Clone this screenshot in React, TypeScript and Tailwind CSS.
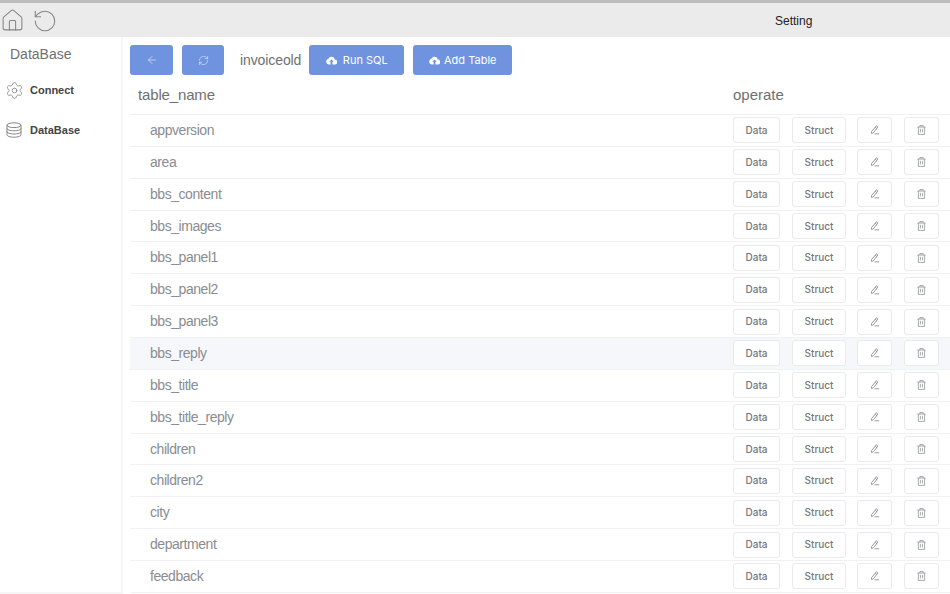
import { ArrowLeft, RefreshCw, Settings, Home, RotateCcw } from "lucide-react";

const tables = [
  "appversion",
  "area",
  "bbs_content",
  "bbs_images",
  "bbs_panel1",
  "bbs_panel2",
  "bbs_panel3",
  "bbs_reply",
  "bbs_title",
  "bbs_title_reply",
  "children",
  "children2",
  "city",
  "department",
  "feedback",
];

function CloudIcon() {
  return (
    <svg width="11" height="9" viewBox="0 0 24 20" fill="currentColor">
      <path d="M19.4 8A7.5 7.5 0 0 0 5.1 6.2 6.5 6.5 0 0 0 6 19h4v-6H7l5-5 5 5h-3v6h5a5.5 5.5 0 0 0 .4-11z" />
    </svg>
  );
}

function DbIcon() {
  return (
    <svg width="16" height="16" viewBox="0 0 16 16" fill="none" stroke="currentColor" strokeWidth="0.9" className="text-[#777]">
      <ellipse cx="8" cy="3.2" rx="7" ry="2.4" />
      <path d="M1 3.2V12.8C1 14.1 4.1 15.2 8 15.2S15 14.1 15 12.8V3.2" />
      <path d="M1 6.4C1 7.7 4.1 8.8 8 8.8S15 7.7 15 6.4" />
      <path d="M1 9.6C1 10.9 4.1 12 8 12S15 10.9 15 9.6" />
    </svg>
  );
}

function EditIcon() {
  return (
    <svg width="10" height="10" viewBox="0 0 12 12" fill="none" stroke="#85888d" strokeWidth="1">
      <path d="M7.6 1 9.5 2.4 4 9.4 1.9 10.3 1.8 8z" />
      <path d="M6.2 2.8 8.2 4.2" />
      <path d="M5.5 10.6H11" />
    </svg>
  );
}

function DeleteIcon() {
  return (
    <svg width="9" height="10" viewBox="0 0 10 11" fill="none" stroke="#92959a" strokeWidth="0.9">
      <path d="M0.5 2.2H9.5" />
      <path d="M3.2 2.2V0.6H6.8V2.2" />
      <path d="M1.5 2.2V10.4H8.5V2.2" />
      <path d="M3.8 4.2V8.2M6.2 4.2V8.2" />
    </svg>
  );
}

function OpButton({ className, children }: { className: string; children: React.ReactNode }) {
  return (
    <button className={`h-[26px] flex items-center justify-center rounded-[3px] border border-[#e8eaee] bg-white font-['Inter',sans-serif] text-[10px] font-medium text-[#74777c] ${className}`}>
      {children}
    </button>
  );
}

function Row({ name }: { name: string }) {
  return (
    <div className={`h-[31.86px] flex items-center border-b border-[#eff1f4] pl-[20px] ${name === "bbs_reply" ? "bg-[#f5f7fa]" : "bg-white"}`}>
      <span className="w-[583px] text-[14px] tracking-[-0.45px] text-[#8a8c91]">{name}</span>
      <div className="flex items-center">
        <OpButton className="w-[47px]">Data</OpButton>
        <OpButton className="w-[54px] ml-[12px]">Struct</OpButton>
        <OpButton className="w-[35px] ml-[11px]">
          <EditIcon />
        </OpButton>
        <OpButton className="w-[35px] ml-[12px]">
          <DeleteIcon />
        </OpButton>
      </div>
    </div>
  );
}

export default function App() {
  return (
    <div className="w-[950px] h-[594px] overflow-hidden flex flex-col bg-white font-['Liberation_Sans',sans-serif]">
      <div className="h-[37px] shrink-0 flex items-center bg-[#ebebeb] border-t-[3px] border-[#bdbdbd]">
        <div className="flex items-center text-[#858585] mt-[1px] w-[62px]">
          <Home size={25} strokeWidth={1} />
          <RotateCcw size={26} strokeWidth={1} className="ml-[7px]" />
        </div>
        <span className="ml-[713px] mt-[1px] text-[12px] text-[#222]">Setting</span>
      </div>

      <div className="flex flex-1 min-h-0">
        <aside className="w-[123px] shrink-0 border-r-2 border-b-2 border-[#f6f6f6]">
          <div className="pl-[10px] pt-[8px] text-[14px] leading-[18px] text-[#707070]">DataBase</div>
          <div className="mt-[7px] flex items-center h-[40px] pl-[5px]">
            <Settings size={19} strokeWidth={0.9} className="text-[#777]" />
            <span className="ml-[6px] text-[11px] font-bold text-[#444]">Connect</span>
          </div>
          <div className="flex items-center h-[40px] pl-[6px]">
            <DbIcon />
            <span className="ml-[8px] text-[11px] font-bold text-[#444]">DataBase</span>
          </div>
        </aside>

        <main className="flex-1 min-w-0 pl-[7px]">
          <div className="flex items-center h-[30px] mt-[8px]">
            <button className="w-[43px] h-[30px] flex items-center justify-center rounded-[3px] bg-[#7093e0] text-white/80">
              <ArrowLeft size={12} strokeWidth={1.3} />
            </button>
            <button className="w-[42px] h-[30px] ml-[9px] flex items-center justify-center rounded-[3px] bg-[#7093e0] text-white/80">
              <RefreshCw size={11} strokeWidth={1.3} />
            </button>
            <span className="ml-[16px] text-[14px] tracking-[-0.1px] text-[#707070]">invoiceold</span>
            <button className="w-[95px] h-[30px] ml-[8px] flex items-center justify-center gap-[6px] rounded-[3px] bg-[#7093e0] font-['Inter',sans-serif] text-[11px] text-white">
              <CloudIcon />
              Run SQL
            </button>
            <button className="w-[99px] h-[30px] ml-[9px] flex items-center justify-center gap-[4px] rounded-[3px] bg-[#7093e0] font-['Inter',sans-serif] text-[11px] text-white">
              <CloudIcon />
              Add Table
            </button>
          </div>
          <div className="h-[40px] flex items-center border-b border-[#eff1f4] pl-[8px] pt-[2px]">
            <span className="w-[595px] text-[15px] tracking-[-0.15px] text-[#707070]">table_name</span>
            <span className="text-[15px] text-[#707070]">operate</span>
          </div>
          {tables.map((t) => (
            <Row key={t} name={t} />
          ))}
        </main>
      </div>
    </div>
  );
}
